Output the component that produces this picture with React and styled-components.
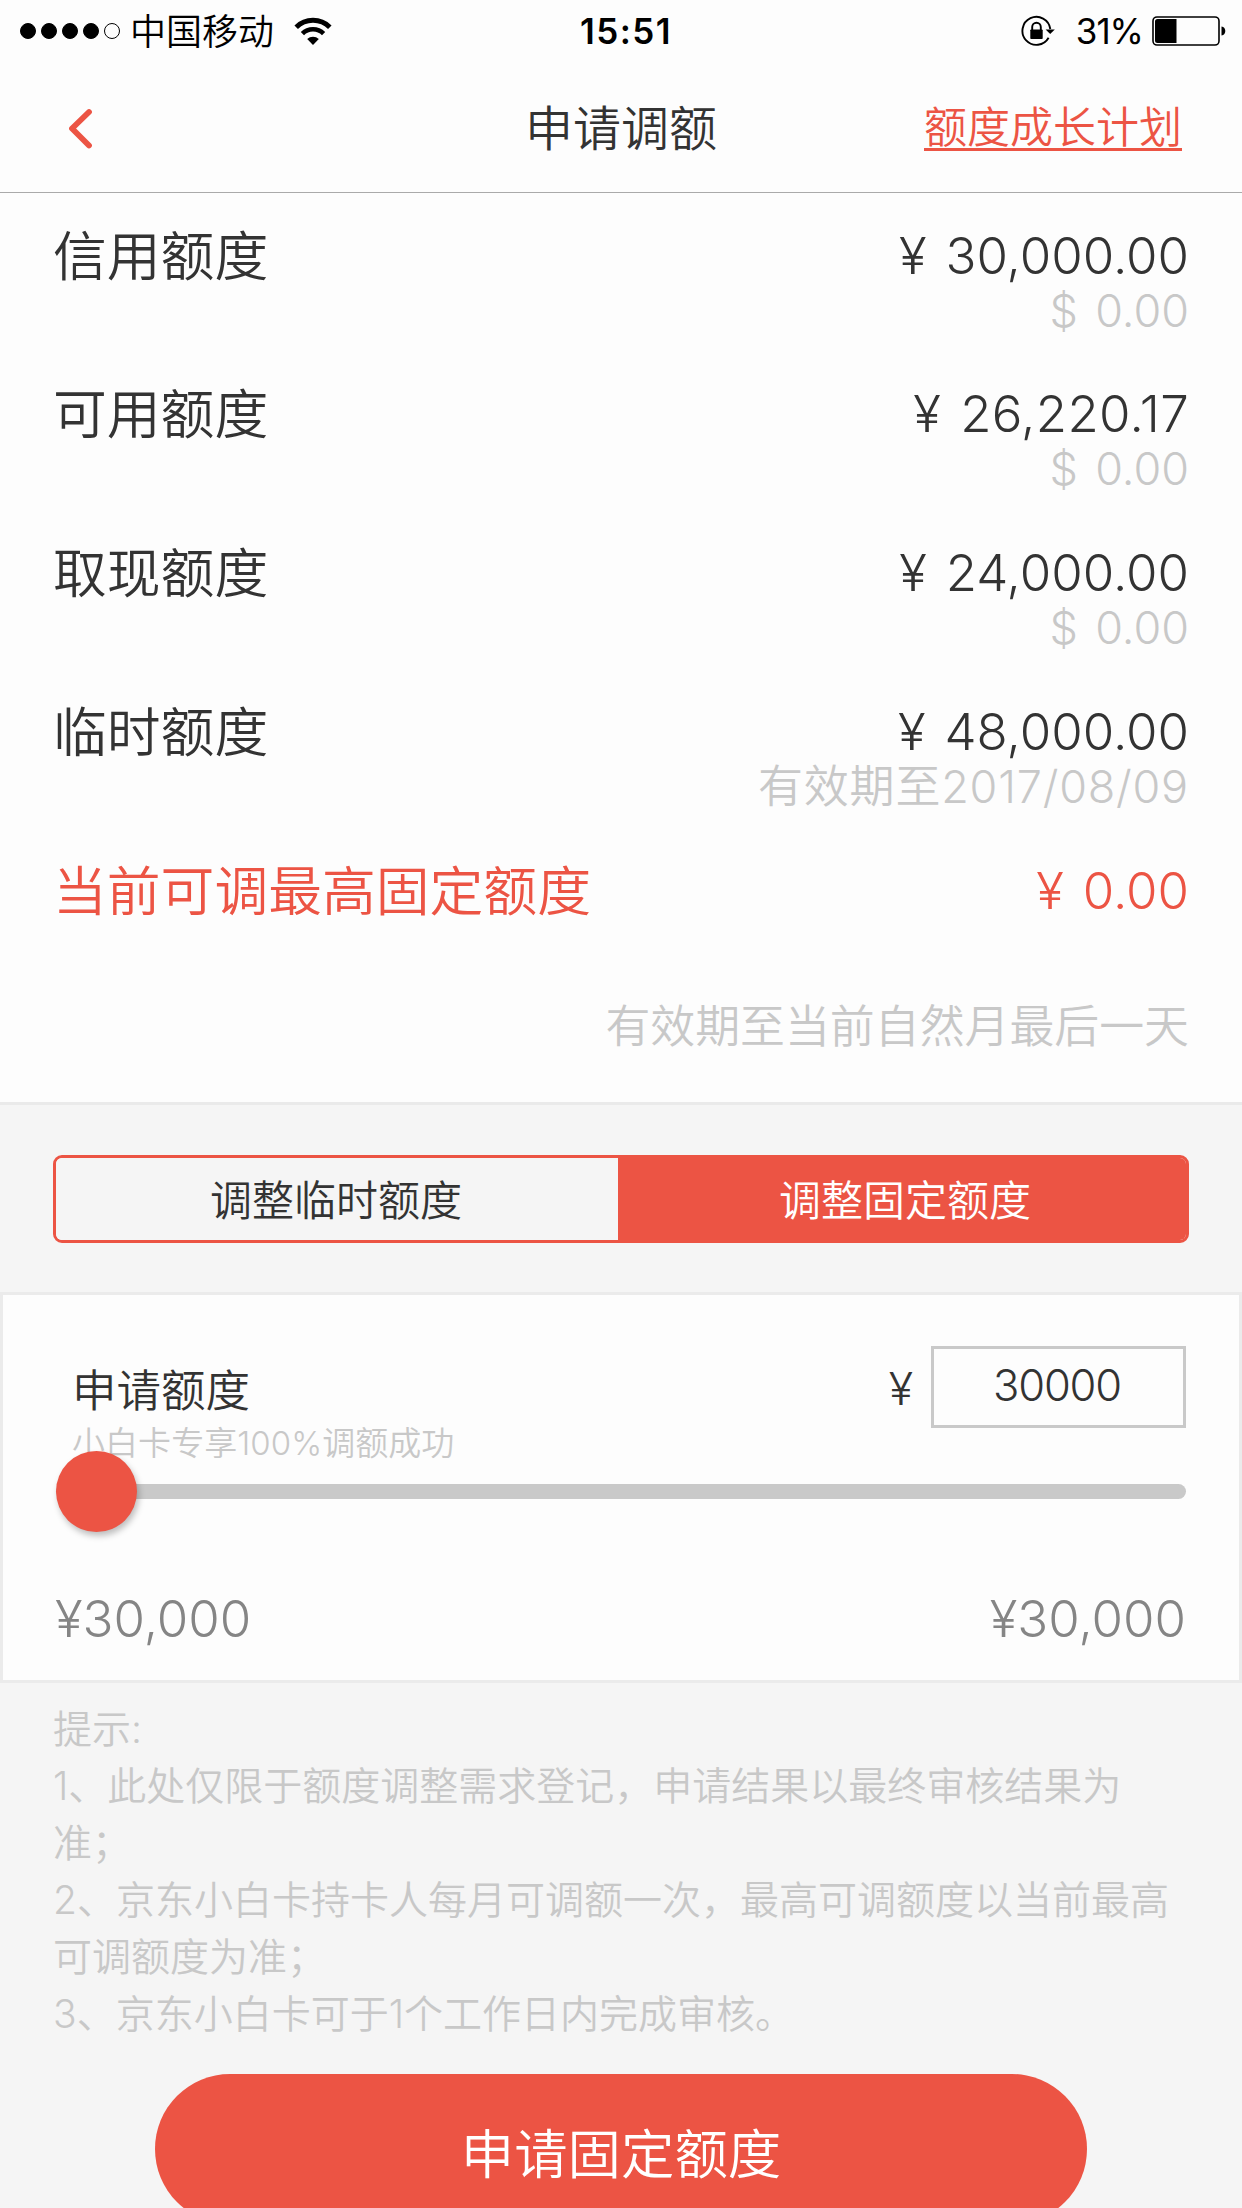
import React, { useState } from 'react'
import styled, { createGlobalStyle } from 'styled-components'

const red = '#ec5444'
const muted = '#c8c8c8'

const GlobalStyle = createGlobalStyle`
  * {
    box-sizing: border-box;
  }

  body {
    margin: 0;
    background: #f5f5f5;
    color: #333;
    font-family: Inter, 'Noto Sans CJK SC', sans-serif;
    font-weight: 350;
  }

  button,
  input {
    font-family: inherit;
    font-weight: inherit;
    color: inherit;
    margin: 0;
    padding: 0;
  }
`

const Screen = styled.div`
  width: 1242px;
  height: 2208px;
  overflow: hidden;
  background: #f5f5f5;
`

const StatusBar = styled.div`
  display: grid;
  grid-template-columns: 1fr auto 1fr;
  align-items: center;
  height: 62px;
  padding: 0 16px 0 20px;
  background: #fdfdfd;
  color: #000;
  font-size: 36px;
  line-height: 60px;
`

const Carrier = styled.div`
  display: flex;
  align-items: center;

  svg {
    margin-left: 20px;
  }
`

const CarrierName = styled.span`
  padding-top: 2px;
`

const Signal = styled.div`
  display: flex;
  gap: 5px;
  margin-right: 10px;
`

const Dot = styled.span`
  width: 16px;
  height: 16px;
  border: 1px solid #000;
  border-radius: 50%;
  background: ${props => (props.$on ? '#000' : 'transparent')};
`

const Clock = styled.div`
  margin-left: 6px;
  font-size: 35px;
  font-weight: 600;
  letter-spacing: 1.4px;
`

const Power = styled.div`
  display: flex;
  align-items: center;
  justify-content: flex-end;
  font-size: 35px;
  font-weight: 400;
  letter-spacing: -1px;

  span {
    margin: 0 9px 0 21px;
  }
`

const NavBar = styled.div`
  display: grid;
  grid-template-columns: 1fr auto 1fr;
  align-items: center;
  height: 131px;
  padding: 0 60px 0 67px;
  background: #fdfdfd;
  border-bottom: 1px solid #aaa;
`

const BackButton = styled.button`
  display: flex;
  width: 26px;
  border: 0;
  background: none;
`

const Title = styled.h1`
  margin: 0 0 0 -7px;
  padding-top: 3px;
  font-size: 48px;
  font-weight: inherit;
  line-height: 128px;
`

const PlanLink = styled.a`
  justify-self: end;
  padding-top: 2px;
  border-bottom: 3px solid ${red};
  color: ${red};
  font-size: 43px;
  line-height: 42px;
`

const Limits = styled.section`
  height: 909px;
  padding: 0 53px;
  background: #fdfdfd;
`

const LimitRow = styled.div`
  display: flex;
  justify-content: space-between;
  height: 158.7px;
  padding-top: 24.8px;
  color: ${props => (props.$highlight ? red : '#333')};
  font-size: 53.8px;
  line-height: 76px;
`

const LimitLabel = styled.div`
  padding-top: 1px;
`

const Amount = styled.div`
  text-align: right;
  font-size: 51px;
  letter-spacing: ${props => props.$tracking || 0};
  word-spacing: 4.5px;
`

const SubAmount = styled.div`
  color: ${muted};
  font-size: 45px;
  letter-spacing: ${props => (props.$date ? '0.8px' : 0)};
  line-height: 34px;
`

const Note = styled.div`
  color: ${muted};
  font-size: 44.9px;
  line-height: 82px;
  text-align: right;
`

const TabStrip = styled.div`
  height: 190px;
  padding: 50px 53px 0;
  border-top: 3px solid #eaeaea;
`

const Tabs = styled.div`
  display: flex;
  height: 88px;
  border: 3px solid ${red};
  border-radius: 9px;
  overflow: hidden;
`

const Tab = styled.button`
  flex: ${props => (props.$active ? '0 0 568px' : '1')};
  padding: ${props => (props.$active ? '3px 0 0 6px' : '3px 2px 0 0')};
  border: 0;
  background: ${props => (props.$active ? red : '#f5f5f5')};
  color: ${props => (props.$active ? '#fff' : '#333')};
  font-size: 42px;
  line-height: 79px;
`

const Card = styled.section`
  height: 391px;
  border: 3px solid #ebebeb;
  background: #fdfdfd;
`

const ApplyRow = styled.div`
  display: flex;
  align-items: flex-start;
  height: 156px;
  padding: 51px 53px 0 69px;
`

const ApplyLabel = styled.div`
  flex: 1;
  padding-top: 15px;
  font-size: 44.5px;
  line-height: 60px;
`

const Promo = styled.div`
  color: ${muted};
  font-size: 33px;
  letter-spacing: 0.05px;
  line-height: 44px;
`

const Currency = styled.span`
  margin-right: 18px;
  padding-top: 13px;
  font-size: 45px;
  line-height: 60px;
`

const AmountInput = styled.input`
  width: 255px;
  height: 82px;
  padding: 0 3px 4px 0;
  border: 3px solid #c9c9c9;
  border-radius: 0;
  outline: 0;
  background: #fdfdfd;
  font-size: 43.5px;
  letter-spacing: -1.2px;
  text-align: center;
`

const Slider = styled.div`
  position: relative;
  display: flex;
  align-items: center;
  height: 81px;
  margin: 0 53px;
`

const Track = styled.div`
  flex: 1;
  height: 15px;
  border-radius: 8px;
  background: #c9c9c9;
`

const Knob = styled.div`
  position: absolute;
  top: 0;
  left: 0;
  width: 81px;
  height: 81px;
  border-radius: 50%;
  background: ${red};
  box-shadow: 2px 4px 6px rgba(0, 0, 0, 0.25);
`

const Range = styled.div`
  display: flex;
  justify-content: space-between;
  margin: 57px 53px 0 52px;
  color: #858585;
  font-size: 51px;
  line-height: 60px;
`

const Tips = styled.div`
  padding: 18px 53px 0;
  color: ${muted};
  font-size: 39px;
  line-height: 56.9px;
  white-space: nowrap;

  p {
    margin: 0;
  }
`

const SubmitButton = styled.button`
  display: block;
  width: 932px;
  height: 150px;
  margin: 32px auto 0;
  padding-top: 3px;
  border: 0;
  border-radius: 75px;
  background: ${red};
  color: #fff;
  font-size: 53.4px;
`

const WifiIcon = () => (
  <svg width="38" height="29" viewBox="0 0 38 29" fill="none" stroke="#000">
    <path d="M2.2 10.2a24 24 0 0 1 33.6 0" strokeWidth="5" />
    <path d="M8.4 16.7a15 15 0 0 1 21.2 0" strokeWidth="4.6" />
    <path d="M19 28l-5.8-5.9a8.3 8.3 0 0 1 11.6 0z" fill="#000" stroke="none" />
  </svg>
)

const LockIcon = () => (
  <svg width="34" height="32" viewBox="0 0 34 32" fill="none" stroke="#000">
    <path d="M27.6 22.8A14 14 0 1 1 29.3 14" strokeWidth="1.9" />
    <path d="M24.6 14.4h9.2l-4.6 4.6z" fill="#000" stroke="none" />
    <path d="M11.2 15.500v-3.500a4.300 4.300 0 0 1 8.600 0v3.500" strokeWidth="1.9" />
    <rect x="9.3" y="14.500" width="12.400" height="9.500" rx="0.8" fill="#000" stroke="none" />
  </svg>
)

const BatteryIcon = () => (
  <svg width="74" height="30" viewBox="0 0 74 30">
    <rect x="1" y="1" width="66" height="28" rx="4" fill="none" stroke="#000" strokeWidth="1.6" />
    <path d="M5.5 3H24.500v24H5.500a2.500 2.500 0 0 1-2.500-2.500v-19A2.500 2.500 0 0 1 5.500 3z" />
    <path d="M69.5 10.5c2.6.4 3.8 2.2 3.8 4.5s-1.2 4.1-3.8 4.5z" />
  </svg>
)

const BackIcon = () => (
  <svg width="26" height="42" viewBox="0 0 26 42" fill="none">
    <path
      d="M22 5L5 21.5L22 38.5"
      stroke={red}
      strokeWidth="5.8"
      strokeLinecap="round"
      strokeLinejoin="round"
    />
  </svg>
)

const limits = [
  { label: '信用额度', amount: '¥ 30,000.00', sub: '$ 0.00' },
  { label: '可用额度', amount: '¥ 26,220.17', sub: '$ 0.00', tracking: '0.3px' },
  { label: '取现额度', amount: '¥ 24,000.00', sub: '$ 0.00' },
  { label: '临时额度', amount: '¥ 48,000.00', sub: '有效期至2017/08/09', date: true },
  { label: '当前可调最高固定额度', amount: '¥ 0.00', highlight: true },
]

const tips = [
  '提示:',
  '1、此处仅限于额度调整需求登记，申请结果以最终审核结果为',
  '准；',
  '2、京东小白卡持卡人每月可调额一次，最高可调额度以当前最高',
  '可调额度为准；',
  '3、京东小白卡可于1个工作日内完成审核。',
]

export default function App() {
  const [amount, setAmount] = useState('30000')

  return (
    <Screen>
      <GlobalStyle />
      <StatusBar>
        <Carrier>
          <Signal>
            {[1, 2, 3, 4, 5].map(n => (
              <Dot key={n} $on={n < 5} />
            ))}
          </Signal>
          <CarrierName>中国移动</CarrierName>
          <WifiIcon />
        </Carrier>
        <Clock>15:51</Clock>
        <Power>
          <LockIcon />
          <span>31%</span>
          <BatteryIcon />
        </Power>
      </StatusBar>
      <NavBar>
        <BackButton>
          <BackIcon />
        </BackButton>
        <Title>申请调额</Title>
        <PlanLink>额度成长计划</PlanLink>
      </NavBar>
      <Limits>
        {limits.map(row => (
          <LimitRow key={row.label} $highlight={row.highlight}>
            <LimitLabel>{row.label}</LimitLabel>
            <Amount $tracking={row.tracking}>
              {row.amount}
              {row.sub && <SubAmount $date={row.date}>{row.sub}</SubAmount>}
            </Amount>
          </LimitRow>
        ))}
        <Note>有效期至当前自然月最后一天</Note>
      </Limits>
      <TabStrip>
        <Tabs>
          <Tab>调整临时额度</Tab>
          <Tab $active>调整固定额度</Tab>
        </Tabs>
      </TabStrip>
      <Card>
        <ApplyRow>
          <ApplyLabel>
            申请额度
            <Promo>小白卡专享100%调额成功</Promo>
          </ApplyLabel>
          <Currency>¥</Currency>
          <AmountInput value={amount} onChange={e => setAmount(e.target.value)} />
        </ApplyRow>
        <Slider>
          <Track />
          <Knob />
        </Slider>
        <Range>
          <span>¥30,000</span>
          <span>¥30,000</span>
        </Range>
      </Card>
      <Tips>
        {tips.map(line => (
          <p key={line}>{line}</p>
        ))}
      </Tips>
      <SubmitButton>申请固定额度</SubmitButton>
    </Screen>
  )
}
